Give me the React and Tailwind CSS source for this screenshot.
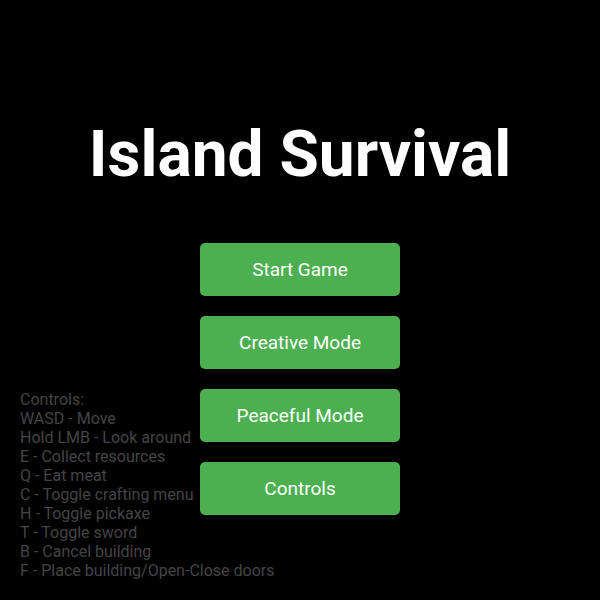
import React from "react";

const controls = [
  "Controls:",
  "WASD - Move",
  "Hold LMB - Look around",
  "E - Collect resources",
  "Q - Eat meat",
  "C - Toggle crafting menu",
  "H - Toggle pickaxe",
  "T - Toggle sword",
  "B - Cancel building",
  "F - Place building/Open-Close doors",
];

const buttons = ["Start Game", "Creative Mode", "Peaceful Mode", "Controls"];

export default function App() {
  return (
    <div
      className="relative w-full h-[600px] bg-black text-white overflow-hidden"
      style={{ fontFamily: "Roboto, 'Liberation Sans', sans-serif" }}
    >
      <div className="flex flex-col items-center pt-[117px]">
        <h1 className="text-[64px] font-bold leading-[75px]">Island Survival</h1>

        {/* Menu */}
        <div className="mt-[51px] flex flex-col gap-[20px]">
          {buttons.map((label) => (
            <button
              key={label}
              className="w-[200px] h-[53px] pt-[2px] rounded-[5px] bg-[#4caf50] text-white text-[19px]"
            >
              {label}
            </button>
          ))}
        </div>
      </div>

      {/* Controls help */}
      <div className="absolute left-[20px] bottom-[20px] text-[16px] leading-[19px] text-[#444444]">
        {controls.map((line) => (
          <div key={line}>{line}</div>
        ))}
      </div>
    </div>
  );
}
